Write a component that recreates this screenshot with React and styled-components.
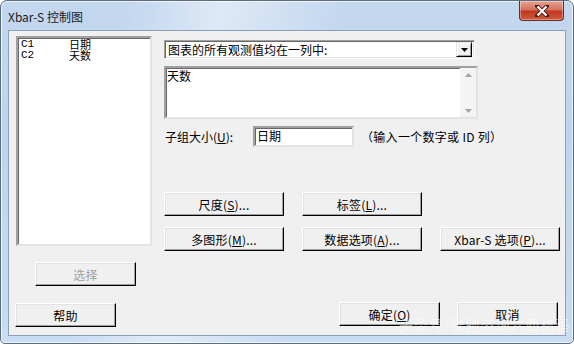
import styled, { createGlobalStyle } from 'styled-components';

const GlobalStyle = createGlobalStyle`
  html, body {
    margin: 0;
    padding: 0;
    background: #ffffff;
  }
  body {
    font-family: "Noto Sans CJK SC", "Liberation Sans", sans-serif;
    font-size: 12px;
  }
`;

const Window = styled.div`
  position: relative;
  box-sizing: border-box;
  width: 574px;
  height: 344px;
  display: flex;
  flex-direction: column;
  padding: 0 7px 7px 7px;
  border: 1px solid #5a6b82;
  border-radius: 7px 7px 5px 5px;
  background:
    linear-gradient(100deg, rgba(255,255,255,0) 20%, rgba(255,255,255,0.45) 35%, rgba(255,255,255,0) 55%),
    linear-gradient(180deg, #c3d7ef 0%, #bed4ee 40%, #c8dcf3 100%);
  box-shadow: inset 0 0 0 1px rgba(255,255,255,0.7);
  overflow: hidden;
`;

const TitleBar = styled.div`
  height: 29px;
  display: flex;
  align-items: flex-start;
`;

const Title = styled.div`
  margin-top: 9px;
  font-family: "Noto Sans CJK SC", "Liberation Sans", sans-serif;
  font-size: 12px;
  line-height: 14px;
  color: #1b1b1b;
`;

const CloseButton = styled.div`
  margin-left: auto;
  margin-right: 2px;
  width: 43px;
  height: 19px;
  display: flex;
  align-items: center;
  justify-content: center;
  border: 1px solid #6b2a22;
  border-top: none;
  border-radius: 0 0 4px 4px;
  background: linear-gradient(180deg, #e8a493 0%, #d6715c 45%, #c0391f 55%, #cf5a3e 100%);
  box-shadow: inset 0 0 0 1px rgba(255,255,255,0.35);
`;

const Client = styled.div`
  flex: 1;
  display: flex;
  flex-direction: column;
  padding: 5px 6px 8px 6px;
  background: #f0f0f0;
  border: 1px solid #8c9fb8;
`;

const Main = styled.div`
  display: flex;
`;

const LeftCol = styled.div`
  width: 137px;
  display: flex;
  flex-direction: column;
`;

const ListBox = styled.div`
  box-sizing: border-box;
  margin-left: 1px;
  width: 136px;
  height: 210px;
  padding: 1px 3px;
  background: #fff;
  border: 2px solid;
  border-color: #a0a0a0 #e3e3e3 #e3e3e3 #a0a0a0;
  box-shadow: inset 1px 1px 0 #696969;
`;

const ListRow = styled.div`
  display: grid;
  grid-template-columns: 48px 1fr;
  align-items: center;
  height: 11px;
  font-family: "Liberation Mono", "Noto Sans CJK SC", monospace;
  font-size: 11px;
  line-height: 11px;
  color: #000;
`;

const Cjk = styled.span`
  font-family: "Noto Sans CJK SC", sans-serif;
  font-size: 11px;
  line-height: 11px;
`;

const Button = styled.button`
  box-sizing: border-box;
  width: ${p => p.$w || 101}px;
  height: 24px;
  margin: 0;
  padding: 0;
  font-family: "Noto Sans CJK SC", "Liberation Sans", sans-serif;
  font-size: 12px;
  color: ${p => (p.disabled ? '#a0a0a0' : '#000')};
  background: #f0f0f0;
  border: 1px solid;
  border-color: #ffffff #000000 #000000 #ffffff;
  box-shadow: inset -1px -1px 0 #a0a0a0, inset 1px 1px 0 #e3e3e3;
  display: flex;
  align-items: center;
  justify-content: center;
  letter-spacing: 0.2px;

  u {
    text-decoration: underline;
  }
`;

const SelectButton = styled(Button)`
  margin: 16px 0 0 20px;
`;

const RightCol = styled.div`
  margin-left: 12px;
  padding-top: 4px;
  display: flex;
  flex-direction: column;
`;

const Dropdown = styled.div`
  box-sizing: border-box;
  width: 311px;
  height: 19px;
  display: flex;
  align-items: center;
  background: #fff;
  border: 1px solid;
  border-color: #a0a0a0 #fff #fff #a0a0a0;
  box-shadow: inset 1px 1px 0 #696969, inset -1px -1px 0 #e3e3e3;
  padding: 1px 2px 1px 3px;
`;

const DropText = styled.span`
  flex: 1;
  line-height: 14px;
  color: #000;
`;

const DropArrow = styled.div`
  box-sizing: border-box;
  width: 16px;
  height: 15px;
  display: flex;
  align-items: center;
  justify-content: center;
  background: #f0f0f0;
  border: 1px solid;
  border-color: #e3e3e3 #000 #000 #e3e3e3;
  box-shadow: inset 1px 1px 0 #fff, inset -1px -1px 0 #a0a0a0;
`;

const TextArea = styled.div`
  box-sizing: border-box;
  margin-top: 7px;
  width: 314px;
  height: 53px;
  display: flex;
  background: #fff;
  border: 2px solid;
  border-color: #a0a0a0 #e3e3e3 #e3e3e3 #a0a0a0;
  box-shadow: inset 1px 1px 0 #696969;
`;

const AreaText = styled.div`
  flex: 1;
  padding: 1px 0 0 1px;
  line-height: 14px;
`;

const ScrollBar = styled.div`
  width: 16px;
  display: flex;
  flex-direction: column;
  justify-content: space-between;
  align-items: center;
  background: #f4f4f4;
  padding: 5px 0 4px;
`;

const FieldRow = styled.div`
  margin-top: 7px;
  height: 21px;
  display: flex;
  align-items: center;
`;

const FieldLabel = styled.span`
  width: 88px;
  padding-left: 1px;
  color: #000;
  u { text-decoration: underline; }
`;

const Input = styled.div`
  box-sizing: border-box;
  width: 101px;
  height: 21px;
  padding: 1px 2px;
  line-height: 14px;
  background: #fff;
  border: 2px solid;
  border-color: #a0a0a0 #e3e3e3 #e3e3e3 #a0a0a0;
  box-shadow: inset 1px 1px 0 #696969;
`;

const Hint = styled.span`
  margin-left: 7px;
  color: #000;
  letter-spacing: 0.3px;
`;

const ButtonGrid = styled.div`
  margin-top: 45px;
  display: grid;
  grid-template-columns: repeat(3, 120px);
  column-gap: 18px;
  row-gap: 11px;
`;

const Bottom = styled.div`
  margin-top: auto;
  display: flex;
  align-items: flex-end;
`;

const OkButton = styled(Button)`
  margin-left: auto;
  margin-bottom: 1px;
`;

const CancelButton = styled(Button)`
  margin-left: 17px;
  margin-right: 1px;
  margin-bottom: 1px;
`;

const Watermark = styled.div`
  position: absolute;
  left: 398px;
  top: 313px;
  font-size: 14px;
  letter-spacing: 1px;
  color: rgba(255, 255, 255, 0.5);
  pointer-events: none;
`;

const Tri = ({ color = '#000', up }) => (
  <svg width="7" height="4" viewBox="0 0 7 4">
    <path d={up ? 'M3.5 0 L7 4 L0 4 Z' : 'M0 0 L7 0 L3.5 4 Z'} fill={color} />
  </svg>
);

export default function App() {
  const buttons = [
    { label: '尺度', key: 'S' },
    { label: '标签', key: 'L' },
    null,
    { label: '多图形', key: 'M' },
    { label: '数据选项', key: 'A' },
    { label: 'Xbar-S 选项', key: 'P' },
  ];

  return (
    <>
      <GlobalStyle />
      <Window>
        <TitleBar>
          <Title>Xbar-S 控制图</Title>
          <CloseButton>
            <svg width="14" height="12" viewBox="0 0 14 12">
              <path d="M2 1 L12 11 M12 1 L2 11" stroke="#4a1b14" strokeWidth="4" strokeLinecap="square" />
              <path d="M2.5 1.5 L11.5 10.5 M11.5 1.5 L2.5 10.5" stroke="#fff" strokeWidth="2.2" />
            </svg>
          </CloseButton>
        </TitleBar>
        <Client>
          <Main>
            <LeftCol>
              <ListBox>
                <ListRow><span>C1</span><Cjk>日期</Cjk></ListRow>
                <ListRow><span>C2</span><Cjk>天数</Cjk></ListRow>
              </ListBox>
              <SelectButton disabled>选择</SelectButton>
            </LeftCol>
            <RightCol>
              <Dropdown>
                <DropText>图表的所有观测值均在一列中:</DropText>
                <DropArrow><Tri /></DropArrow>
              </Dropdown>
              <TextArea>
                <AreaText>天数</AreaText>
                <ScrollBar>
                  <Tri up color="#a3a3a3" />
                  <Tri color="#a3a3a3" />
                </ScrollBar>
              </TextArea>
              <FieldRow>
                <FieldLabel>子组大小(<u>U</u>):</FieldLabel>
                <Input>日期</Input>
                <Hint>（输入一个数字或 ID 列）</Hint>
              </FieldRow>
              <ButtonGrid>
                {buttons.map((b, i) =>
                  b ? (
                    <Button key={i} $w={120}>
                      {b.label}(<u>{b.key}</u>)...
                    </Button>
                  ) : (
                    <span key={i} />
                  )
                )}
              </ButtonGrid>
            </RightCol>
          </Main>
          <Bottom>
            <Button>帮助</Button>
            <OkButton>确定(<u>O</u>)</OkButton>
            <CancelButton>取消</CancelButton>
          </Bottom>
        </Client>
        <Watermark>头条号/张驰咨询六西格玛</Watermark>
      </Window>
    </>
  );
}
